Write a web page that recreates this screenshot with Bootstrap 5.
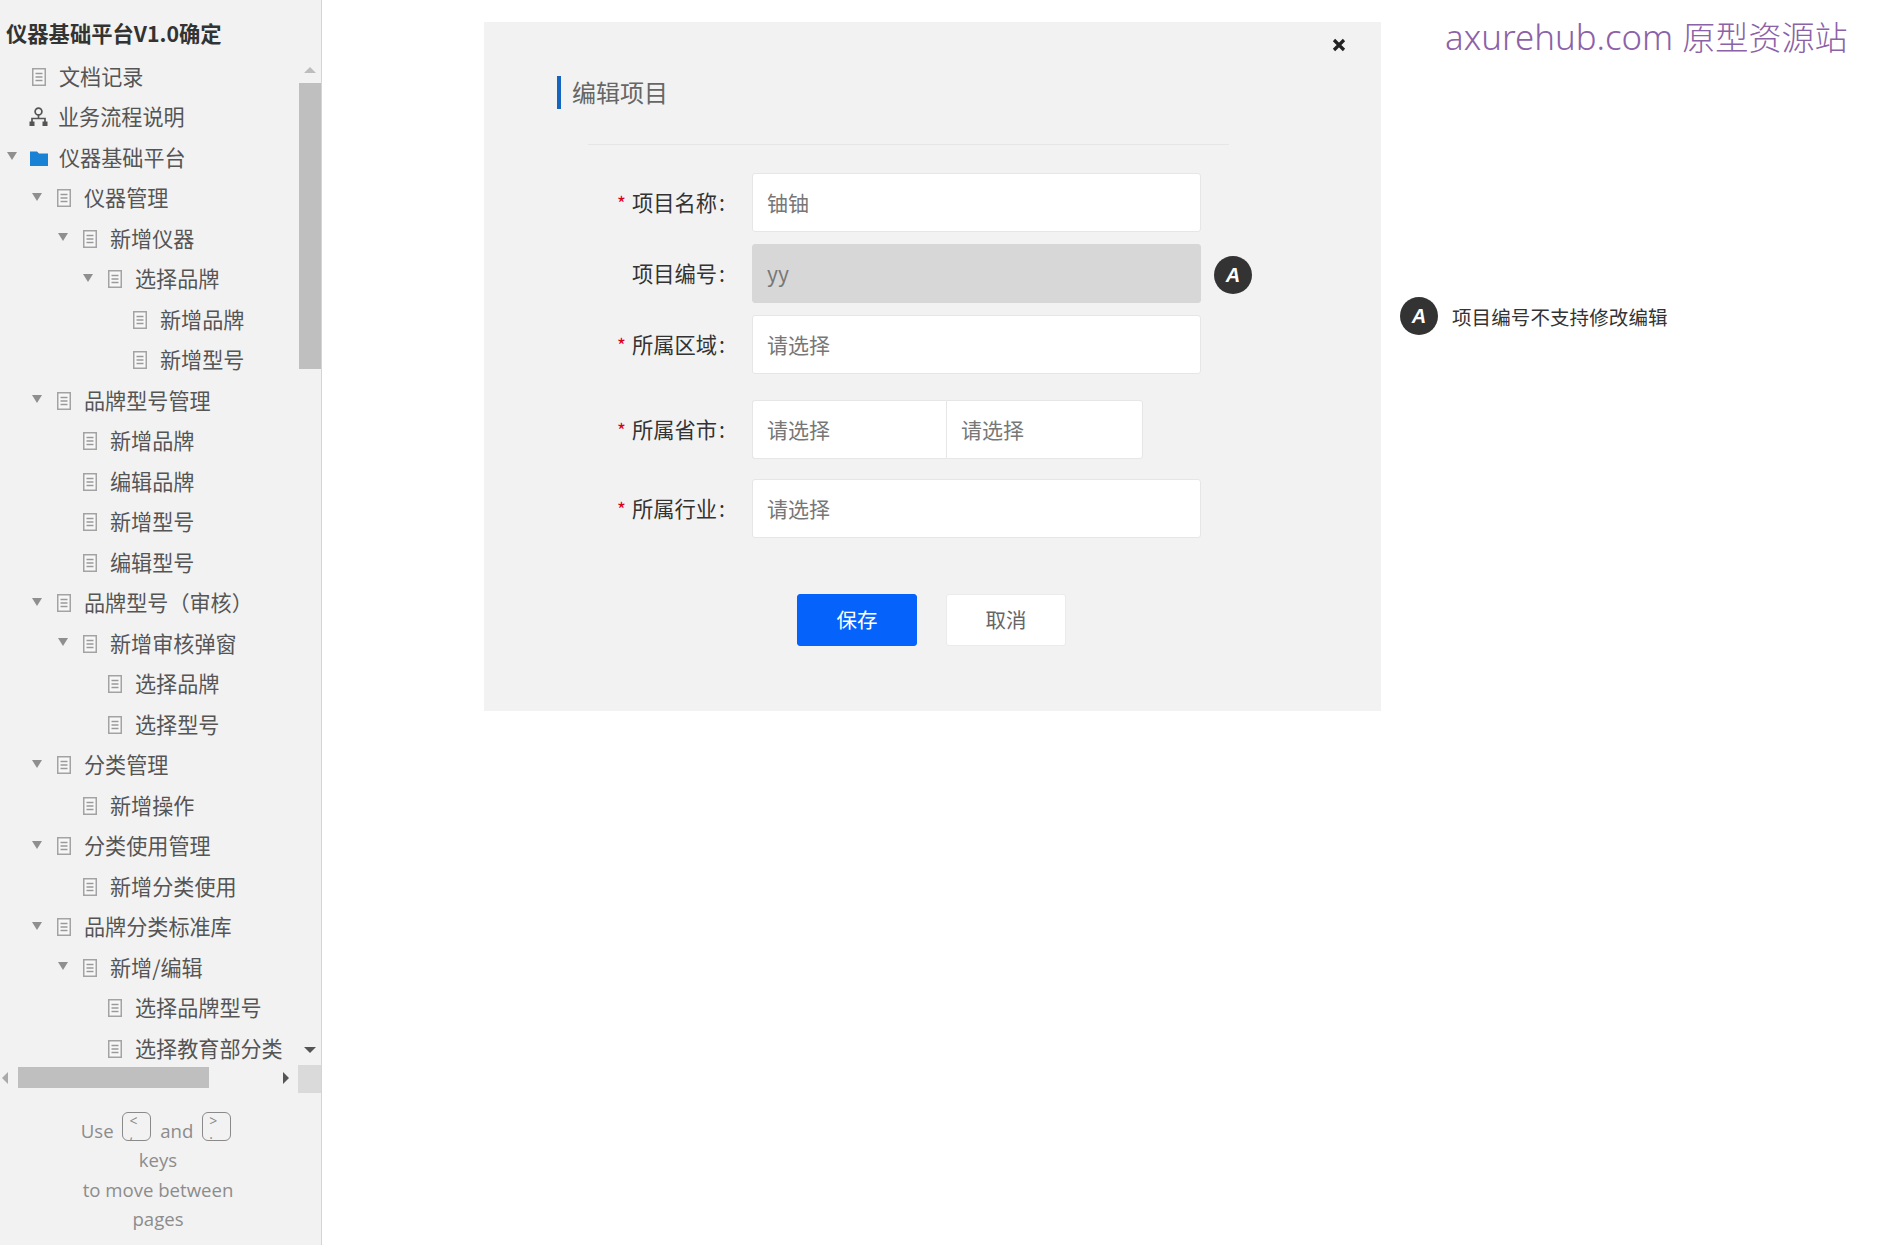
<!DOCTYPE html>
<html lang="zh"><head><meta charset="utf-8"><title>编辑项目</title>
<link href="https://cdn.jsdelivr.net/npm/bootstrap@5.3.0/dist/css/bootstrap.min.css" rel="stylesheet">
<style>
html,body{height:100%;margin:0;overflow:hidden;background:#fff}
body{font-family:"Noto Sans CJK SC","Liberation Sans",sans-serif;color:#333;font-size:21px}
.shell{height:1245px}
.side{width:322px;height:1245px;background:#f2f2f2;border-right:1px solid #d4d4d4;flex:none}
.side-title{height:55.5px;padding:18px 0 0 6px;font-size:21.3px;font-weight:700;line-height:30px;color:#333;white-space:nowrap}
.tree-wrap{height:1011.5px;overflow:hidden}
.tree{width:299px;flex:none;overflow:hidden}
.tr-row{height:40.5px;color:#555;white-space:nowrap;line-height:40px;font-size:21.1px}
.tl0{padding-left:7px}.tl1{padding-left:32px}.tl2{padding-left:58px}.tl3{padding-left:83px}.tl4{padding-left:108px}
.tri{width:24px;flex:none;display:block;transform:translateY(1px)}
.tri::before{content:"";display:block;width:0;height:0;margin-top:-3px;border-left:5.5px solid transparent;border-right:5.5px solid transparent;border-top:8px solid #8f8f8f}
.ico{width:14px;height:18px;flex:none;margin:2px 13px 0 1px}
.ico-org{width:19px;height:19px;margin:0 10px 0 -2px}
.ico-dir{width:18px;height:16px;margin:2px 11px 0 -1px}
.vbar{width:22px;flex:none}
.up-arr{height:27.5px;padding:11px 0 0 5px}
.up-arr::before{content:"";display:block;width:0;height:0;border-left:6px solid transparent;border-right:6px solid transparent;border-bottom:6px solid #bdbdbd}
.thumb-v{height:286px;width:22px;background:#bfbfbf}
.dn-arr{height:20px;margin-top:678px;padding:0 0 0 5px}
.dn-arr::before{content:"";display:block;width:0;height:0;border-left:6px solid transparent;border-right:6px solid transparent;border-top:6px solid #555}
.hbar{height:28px}
.l-arr{width:18px;padding:5px 0 0 2px;flex:none}
.l-arr::before{content:"";display:block;width:0;height:0;border-top:6px solid transparent;border-bottom:6px solid transparent;border-right:6px solid #aaa}
.thumb-h{width:191px;height:21px;background:#bfbfbf;flex:none}
.r-arr{width:89px;padding:5px 0 0 74px;flex:none}
.r-arr::before{content:"";display:block;width:0;height:0;border-top:6px solid transparent;border-bottom:6px solid transparent;border-left:6px solid #555}
.corner{width:23px;height:28px;background:#dadada;flex:none;margin-top:-2px}
.hint{font-family:"Open Sans","Liberation Sans",sans-serif;font-size:18.6px;line-height:29.8px;color:#8c8c8c;text-align:center;padding-top:16.5px;width:316px}
.kcap{display:inline-block;width:29px;height:29px;border:1.5px solid #8a8a8a;border-radius:6px;font-size:14px;line-height:13px;text-align:left;padding:1px 0 0 6px;vertical-align:-1.5px;margin:0 4px;color:#8a8a8a}
.stage{min-width:0}
.modal-box{width:897px;height:689px;background:#f2f2f2;margin:22px 0 0 162px;padding-top:54px;flex:none}
.closer{position:absolute;right:35px;top:16px;width:14px;height:14px}
.head{margin-left:73px;height:33px;line-height:31px;font-size:24px;color:#666;border-left:4px solid #1565c0;padding-left:11px}
.rule{height:1px;background:#e6e6e6;margin:35px 0 28px 104px;width:641px}
.f-row{height:59px}
.g12{margin-top:12px}.g26{margin-top:26px}.g20{margin-top:20px}
.lab{width:241px;margin-right:27px;flex:none;text-align:right;font-size:21.3px;color:#333;line-height:57px;white-space:nowrap}
.lab i{font-style:normal;color:#d9001b;margin-right:6px;font-size:19px}
.lab b{font-weight:400;margin-left:2px}
.fld{width:449px;height:59px;border:1px solid #e6e6e6;border-radius:3px;background:#fff;font-size:21px;padding:0 14px 2px;color:#777;box-shadow:none}
.fld::placeholder{color:#777;opacity:1}
.fld:disabled{background:#d7d7d7;color:#777;border-color:#d7d7d7}
.fld-a{width:194px;border-radius:3px 0 0 3px;border-right:0}
.fld-b{width:197px;border-radius:0 3px 3px 0;border-left:1px solid #e6e6e6}
.mark-a{width:38px;height:38px;border-radius:50%;background:#333;color:#fff;font-family:"Liberation Sans",sans-serif;font-weight:700;font-style:italic;font-size:20px;line-height:38px;text-align:center;flex:none}
.mark-in{margin-left:13px;margin-top:12px}
.acts{margin:56px 0 0 313px}
.bt{height:52px;font-size:20.500px;border-radius:3px;padding:0 0 2px;line-height:46px}
.bt-save{width:120px;background:#0563fb;border-color:#0563fb;color:#fff}
.bt-cancel{width:120px;margin-left:29px;background:#fff;border:1px solid #ebebeb;color:#666}
.right-col{min-width:0;flex:1}
.wm{margin:10px 0 0 64px;height:52px;font-family:"Noto Sans","Noto Sans CJK SC",sans-serif;font-weight:300;font-size:34.8px;line-height:52px;color:#8b62a8;white-space:nowrap}
.wm span{font-family:"Noto Sans CJK SC",sans-serif;font-size:33.1px}
.note{margin:233px 0 0 19px}
.note span{margin-left:14px;font-size:19.5px;letter-spacing:.1px;color:#333;line-height:38px;padding-top:3px}
</style></head><body>
<svg width="0" height="0" class="position-absolute"><defs>
<symbol id="doc" viewBox="0 0 14 18"><path d="M.75.75h12.5v16.5H.75z" fill="#f7f7f7" stroke="#a3a3a3" stroke-width="1.5"/><path d="M3.5 5.5h7M3.5 9h7M3.5 12.5h7" stroke="#9a9a9a" stroke-width="1.4"/></symbol>
</defs></svg>
<div class="shell d-flex">
<aside class="side d-flex flex-column">
<div class="side-title">仪器基础平台V1.0确定</div>
<div class="tree-wrap d-flex">
<div class="tree">
<div class="tr-row d-flex align-items-center tl0"><span class="tri invisible"></span><svg class="ico"><use href="#doc"/></svg>文档记录</div>
<div class="tr-row d-flex align-items-center tl0"><span class="tri invisible"></span><svg class="ico ico-org" viewBox="0 0 19 19"><circle cx="9.500" cy="4.500" r="3.400" fill="none" stroke="#555" stroke-width="1.700"/><path d="M9.500 8v4M3 15v-3.500h13V15" fill="none" stroke="#555" stroke-width="1.700"/><path d="M.5 14.500h5V19h-5zM13.500 14.500h5V19h-5z" fill="#555"/></svg>业务流程说明</div>
<div class="tr-row d-flex align-items-center tl0"><span class="tri"></span><svg class="ico ico-dir" viewBox="0 0 18 16"><path d="M0 1.500h7l2 2h9V16H0z" fill="#1a82d4"/></svg>仪器基础平台</div>
<div class="tr-row d-flex align-items-center tl1"><span class="tri"></span><svg class="ico"><use href="#doc"/></svg>仪器管理</div>
<div class="tr-row d-flex align-items-center tl2"><span class="tri"></span><svg class="ico"><use href="#doc"/></svg>新增仪器</div>
<div class="tr-row d-flex align-items-center tl3"><span class="tri"></span><svg class="ico"><use href="#doc"/></svg>选择品牌</div>
<div class="tr-row d-flex align-items-center tl4"><span class="tri invisible"></span><svg class="ico"><use href="#doc"/></svg>新增品牌</div>
<div class="tr-row d-flex align-items-center tl4"><span class="tri invisible"></span><svg class="ico"><use href="#doc"/></svg>新增型号</div>
<div class="tr-row d-flex align-items-center tl1"><span class="tri"></span><svg class="ico"><use href="#doc"/></svg>品牌型号管理</div>
<div class="tr-row d-flex align-items-center tl2"><span class="tri invisible"></span><svg class="ico"><use href="#doc"/></svg>新增品牌</div>
<div class="tr-row d-flex align-items-center tl2"><span class="tri invisible"></span><svg class="ico"><use href="#doc"/></svg>编辑品牌</div>
<div class="tr-row d-flex align-items-center tl2"><span class="tri invisible"></span><svg class="ico"><use href="#doc"/></svg>新增型号</div>
<div class="tr-row d-flex align-items-center tl2"><span class="tri invisible"></span><svg class="ico"><use href="#doc"/></svg>编辑型号</div>
<div class="tr-row d-flex align-items-center tl1"><span class="tri"></span><svg class="ico"><use href="#doc"/></svg>品牌型号（审核）</div>
<div class="tr-row d-flex align-items-center tl2"><span class="tri"></span><svg class="ico"><use href="#doc"/></svg>新增审核弹窗</div>
<div class="tr-row d-flex align-items-center tl3"><span class="tri invisible"></span><svg class="ico"><use href="#doc"/></svg>选择品牌</div>
<div class="tr-row d-flex align-items-center tl3"><span class="tri invisible"></span><svg class="ico"><use href="#doc"/></svg>选择型号</div>
<div class="tr-row d-flex align-items-center tl1"><span class="tri"></span><svg class="ico"><use href="#doc"/></svg>分类管理</div>
<div class="tr-row d-flex align-items-center tl2"><span class="tri invisible"></span><svg class="ico"><use href="#doc"/></svg>新增操作</div>
<div class="tr-row d-flex align-items-center tl1"><span class="tri"></span><svg class="ico"><use href="#doc"/></svg>分类使用管理</div>
<div class="tr-row d-flex align-items-center tl2"><span class="tri invisible"></span><svg class="ico"><use href="#doc"/></svg>新增分类使用</div>
<div class="tr-row d-flex align-items-center tl1"><span class="tri"></span><svg class="ico"><use href="#doc"/></svg>品牌分类标准库</div>
<div class="tr-row d-flex align-items-center tl2"><span class="tri"></span><svg class="ico"><use href="#doc"/></svg>新增/编辑</div>
<div class="tr-row d-flex align-items-center tl3"><span class="tri invisible"></span><svg class="ico"><use href="#doc"/></svg>选择品牌型号</div>
<div class="tr-row d-flex align-items-center tl3"><span class="tri invisible"></span><svg class="ico"><use href="#doc"/></svg>选择教育部分类</div>
</div>
<div class="vbar"><div class="up-arr"></div><div class="thumb-v"></div><div class="dn-arr"></div></div>
</div>
<div class="hbar d-flex"><div class="l-arr"></div><div class="thumb-h"></div><div class="r-arr"></div><div class="corner"></div></div>
<div class="hint">Use <span class="kcap">&lt;<br>,</span> and <span class="kcap">&gt;<br>.</span><br>keys<br>to move between<br>pages</div>
</aside>
<main class="stage d-flex flex-grow-1 align-items-start">
<section class="modal-box position-relative">
<svg class="closer" viewBox="0 0 14 14"><path d="M2 2l10 10M12 2L2 12" stroke="#222" stroke-width="3.200"/></svg>
<div class="head">编辑项目</div>
<div class="rule"></div>
<div class="f-row d-flex"><div class="lab"><i>*</i>项目名称<b>:</b></div><input class="form-control fld" value="铀铀"></div>
<div class="f-row d-flex g12"><div class="lab">项目编号<b>:</b></div><input class="form-control fld" value="yy" disabled><div class="mark-a mark-in">A</div></div>
<div class="f-row d-flex g12"><div class="lab"><i>*</i>所属区域<b>:</b></div><input class="form-control fld" placeholder="请选择"></div>
<div class="f-row d-flex g26"><div class="lab"><i>*</i>所属省市<b>:</b></div><input class="form-control fld fld-a" placeholder="请选择"><input class="form-control fld fld-b" placeholder="请选择"></div>
<div class="f-row d-flex g20"><div class="lab"><i>*</i>所属行业<b>:</b></div><input class="form-control fld" placeholder="请选择"></div>
<div class="acts d-flex"><button class="btn bt bt-save">保存</button><button class="btn bt bt-cancel">取消</button></div>
</section>
<div class="right-col">
<div class="wm">axurehub.com <span>原型资源站</span></div>
<div class="note d-flex align-items-center"><div class="mark-a">A</div><span>项目编号不支持修改编辑</span></div>
</div>
</main>
</div>
<script src="https://cdn.jsdelivr.net/npm/bootstrap@5.3.0/dist/js/bootstrap.bundle.min.js"></script>
</body></html>
